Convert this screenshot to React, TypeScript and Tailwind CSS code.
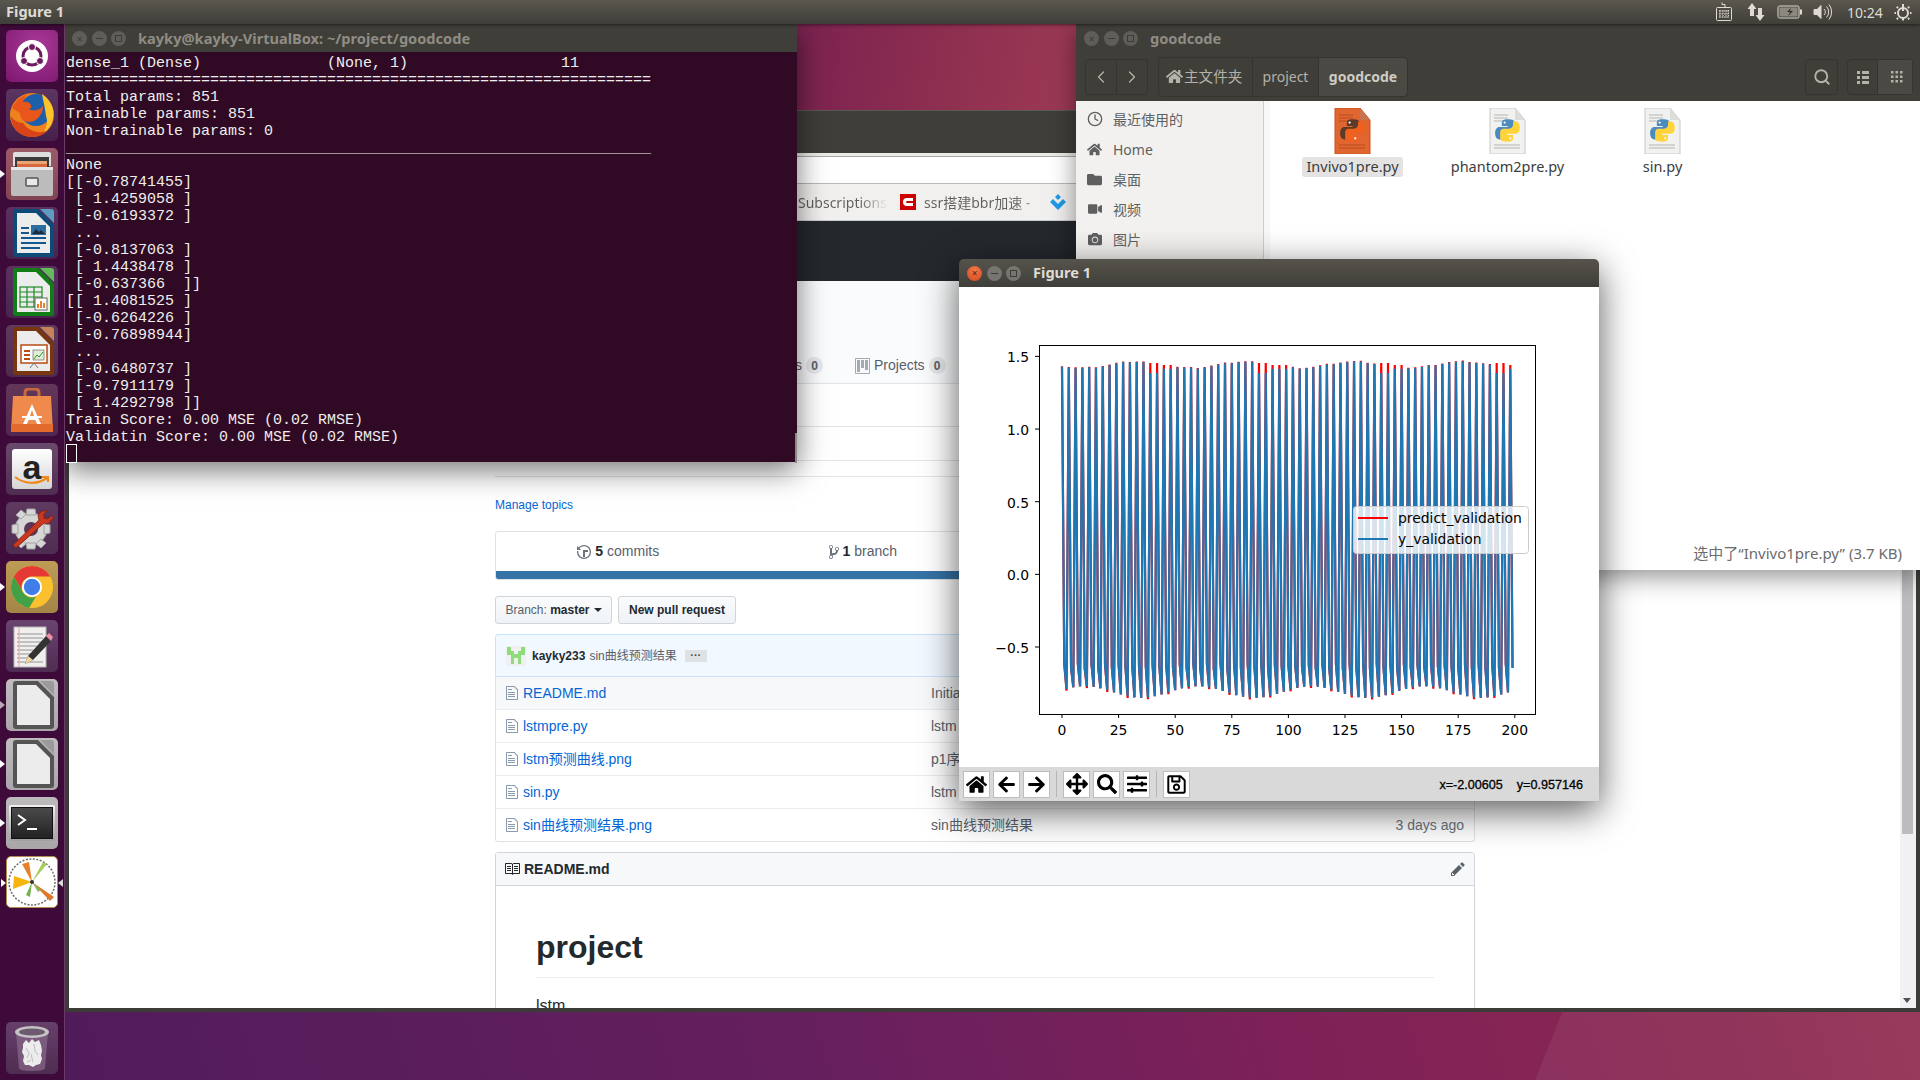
import React from 'react'
import { ChevronLeft, ChevronRight, Clock, Search } from 'lucide-react'
import {
  FaArrowLeft,
  FaArrowRight,
  FaArrowsAlt,
  FaCamera,
  FaFolder,
  FaHome,
  FaRegSave,
  FaSearch,
  FaSlidersH,
  FaVideo,
} from 'react-icons/fa'

const UI_FONT = "font-['Noto_Sans','Noto_Sans_CJK_SC',sans-serif]"
const WEB_FONT = "font-['Liberation_Sans','Noto_Sans_CJK_SC',sans-serif]"

const TERMINAL_LINES = [
  'dense_1 (Dense)              (None, 1)                 11',
  '='.repeat(65),
  'Total params: 851',
  'Trainable params: 851',
  'Non-trainable params: 0',
  '_'.repeat(65),
  'None',
  '[[-0.78741455]',
  ' [ 1.4259058 ]',
  ' [-0.6193372 ]',
  ' ...',
  ' [-0.8137063 ]',
  ' [ 1.4438478 ]',
  ' [-0.637366  ]]',
  '[[ 1.4081525 ]',
  ' [-0.6264226 ]',
  ' [-0.76898944]',
  ' ...',
  ' [-0.6480737 ]',
  ' [-0.7911179 ]',
  ' [ 1.4292798 ]]',
  'Train Score: 0.00 MSE (0.02 RMSE)',
  'Validatin Score: 0.00 MSE (0.02 RMSE)',
]

const FILES = [
  { name: 'README.md', message: 'Initial commit', age: '', hover: true },
  { name: 'lstmpre.py', message: 'lstm', age: '', hover: false },
  { name: 'lstm预测曲线.png', message: 'p1序列', age: '', hover: false },
  { name: 'sin.py', message: 'lstm', age: '', hover: false },
  { name: 'sin曲线预测结果.png', message: 'sin曲线预测结果', age: '3 days ago', hover: false },
]

// the plotted values repeat every 3 samples: peak, kink, trough
const STRONG_MISS = [39, 42, 87, 90, 141, 144, 192, 195]
const MILD_MISS = [45, 48, 93, 96, 99, 147, 150, 198]

function peakAt(x: number) {
  const wobble = ((x * 7) % 5) * 0.002
  return 1.437 + 0.022 * Math.cos(((x - 33) * 2 * Math.PI) / 48) + wobble
}

function troughAt(x: number) {
  return -0.81 - 0.04 * Math.cos(((x - 35) * 2 * Math.PI) / 50)
}

function seriesPoints(kind: 'predict' | 'actual') {
  const points: string[] = []
  const toX = (x: number) => (103 + x * 2.264).toFixed(2)
  const toY = (v: number) => (69.4 + (1.5 - v) * 145.3).toFixed(2)
  for (let x = 0; x < 200; x += 3) {
    let peak = peakAt(x)
    let trough = troughAt(x + 2)
    if (kind === 'predict') {
      peak = STRONG_MISS.includes(x) ? 1.455 : MILD_MISS.includes(x) ? 1.44 : peak + 0.004
      trough -= x % 9 === 0 ? 0.012 : 0
    } else if (STRONG_MISS.includes(x)) {
      peak = 1.385
    } else if (MILD_MISS.includes(x)) {
      peak = 1.415
    }
    points.push(`${toX(x)},${toY(peak)}`)
    points.push(`${toX(x + 1)},${toY(-0.63 + 0.015 * Math.cos(x))}`)
    if (x < 198) points.push(`${toX(x + 2)},${toY(trough)}`)
  }
  return points.join(' ')
}

function WindowButtons({ focused }: { focused?: boolean }) {
  return (
    <div className="flex items-center gap-[4.5px]">
      <div
        className={
          focused
            ? 'w-[15px] h-[15px] rounded-full bg-[radial-gradient(circle_at_50%_30%,#f0794a,#d9481c)] flex items-center justify-center text-[10px] leading-none text-[#5a2010]'
            : 'w-[15px] h-[15px] rounded-full bg-[#5f5d57] flex items-center justify-center text-[10px] leading-none text-[#3c3b37]'
        }
      >
        ×
      </div>
      <div
        className={
          focused
            ? 'w-[15px] h-[15px] rounded-full bg-[#77756f] flex items-center justify-center'
            : 'w-[15px] h-[15px] rounded-full bg-[#5f5d57] flex items-center justify-center'
        }
      >
        <div className="w-[7px] h-[1px] bg-[#3c3b37]" />
      </div>
      <div
        className={
          focused
            ? 'w-[15px] h-[15px] rounded-full bg-[#77756f] flex items-center justify-center'
            : 'w-[15px] h-[15px] rounded-full bg-[#5f5d57] flex items-center justify-center'
        }
      >
        <div className="w-[7px] h-[7px] border border-[#3c3b37]" />
      </div>
    </div>
  )
}

function TopPanel() {
  return (
    <div
      className={`absolute left-0 top-0 z-50 w-full h-[24px] flex items-center pl-[6px] pr-[4px] bg-[linear-gradient(#5a574e,#3f3e39)] shadow-[0_1px_3px_rgba(0,0,0,0.5)] text-[#dfdbd2] ${UI_FONT}`}
    >
      <span className="text-[14.6px] font-bold">Figure 1</span>
      <div className="ml-auto flex items-center h-full">
        <div className="w-[32px] flex justify-center">
          <svg width="18" height="20" viewBox="0 0 18 20" fill="none" stroke="#dfdbd2">
            <path d="M10 5V2.5h-3V0.5" />
            <rect x="1.5" y="5.5" width="15" height="13" rx="1" />
            <path d="M4 9h10M4 12h10M4 15h10M5 8v8M8 8v8M11 8v8M13.500 8v8" strokeDasharray="1.500 1" />
          </svg>
        </div>
        <div className="w-[32px] flex justify-center">
          <svg width="18" height="20" viewBox="0 0 18 20" fill="#dfdbd2">
            <path d="M5 1l4.500 6H7v7H3V7H.5zM13 19l-4.500-6H11V6h4v7h2.500z" />
          </svg>
        </div>
        <div className="w-[34px] flex justify-center">
          <svg width="25" height="14" viewBox="0 0 25 14" fill="none">
            <rect x="1" y="1" width="21" height="12" rx="1.500" stroke="#dfdbd2" />
            <rect x="2.500" y="2.500" width="18" height="9" fill="#8a877e" />
            <rect x="23" y="4.500" width="2" height="5" fill="#dfdbd2" />
            <path d="M14 3l-4 4h3l-2 4 5-5h-3z" fill="#2f2e2a" />
          </svg>
        </div>
        <div className="w-[34px] flex justify-center">
          <svg width="20" height="18" viewBox="0 0 20 18" fill="none" stroke="#dfdbd2">
            <path d="M1 6.500h3l4-4v13l-4-4H1z" fill="#dfdbd2" />
            <path d="M11 6a4 4 0 0 1 0 6M13.500 3.500a8 8 0 0 1 0 11M16 1.500a12 12 0 0 1 0 15" />
          </svg>
        </div>
        <div className="w-[50px] text-center text-[14px]">10:24</div>
        <div className="w-[26px] flex justify-center">
          <svg width="18" height="18" viewBox="0 0 18 18" fill="none" stroke="#dfdbd2" strokeWidth="2">
            <circle cx="9" cy="10" r="5" />
            <path d="M9 1v7M9 15v2.500M2 10H.5M16 10h1.500M4 5L2.800 3.800M14 5l1.200-1.200M4 15l-1.200 1.200M14 15l1.200 1.200" />
          </svg>
        </div>
      </div>
    </div>
  )
}

function Tile({ className, pip, pipRight, hollow, children }: { className: string; pip?: boolean; pipRight?: boolean; hollow?: boolean; children: React.ReactNode }) {
  return (
    <div className={`relative shrink-0 w-[52px] h-[52px] mx-[6px] rounded-[5px] flex items-center justify-center ${className}`}>
      {pip && (
        <div className="absolute left-[-6px] top-[22px] w-0 h-0 border-y-[4px] border-y-transparent border-l-[5px] border-l-white" />
      )}
      {hollow && (
        <div className="absolute left-[-6px] top-[22px] w-0 h-0 border-y-[4px] border-y-transparent border-l-[5px] border-l-[#b9a8b6]" />
      )}
      {pipRight && (
        <div className="absolute right-[-6px] top-[22px] w-0 h-0 border-y-[4px] border-y-transparent border-r-[5px] border-r-[#dcdcdc]" />
      )}
      {children}
    </div>
  )
}

function LibreDoc({ edge, fold, children }: { edge: string; fold: string; children?: React.ReactNode }) {
  return (
    <svg width="44" height="48" viewBox="0 0 44 48">
      <path d="M3 3q0-3 3-3h22l16 16v29q0 3-3 3H6q-3 0-3-3z" fill={edge} />
      <path d="M7 4h19l14 14v26H7z" fill="#ececec" />
      <path d="M30 0h11q3 0 3 3v11z" fill={fold} />
      {children}
    </svg>
  )
}

function Launcher() {
  return (
    <div className="absolute left-0 top-[24px] bottom-0 z-40 w-[65px] pt-[6px] pb-[6px] flex flex-col gap-[7px] bg-[#3e0a3a] border-r border-r-[#6b3a67]">
      <Tile className="bg-[radial-gradient(circle_at_60%_30%,#a83a96,#7d1670)]">
        <svg width="44" height="44" viewBox="0 0 44 44">
          <circle cx="22" cy="22" r="16" fill="#fff" />
          <circle cx="22" cy="22" r="9" fill="none" stroke="#6d1a5f" strokeWidth="3" />
          <circle cx="22" cy="13" r="3.500" fill="#6d1a5f" stroke="#fff" />
          <circle cx="14" cy="27" r="3.500" fill="#6d1a5f" stroke="#fff" />
          <circle cx="30" cy="27" r="3.500" fill="#6d1a5f" stroke="#fff" />
        </svg>
      </Tile>
      <Tile className="bg-[linear-gradient(#5c3660,#46214c)]">
        <svg width="46" height="46" viewBox="0 0 46 46">
          <circle cx="23" cy="23" r="22" fill="#f0811f" />
          <circle cx="27" cy="18" r="16" fill="#1d5fa8" />
          <path d="M33 2c8 5 13 14 11 24-1 7-5 12-10 15 4-6 5-11 3-17-1-9-3-16-4-22z" fill="#fcc32c" />
          <path d="M3 16C6 9 12 4 18 3c-3 3-4 5-4 7 3-1 7 0 8 3 1 2 0 3-2 4 5 3 11 1 14-3 0 8-6 16-14 16-6 0-9-4-9-9z" fill="#e8561c" />
          <path d="M2 24c0 12 9 21 21 21 6 0 11-2 15-6-9 3-19 0-24-8-5 0-10-3-12-7z" fill="#d9431a" />
        </svg>
      </Tile>
      <Tile pip className="bg-[linear-gradient(#9c5a68,#824452)]">
        <svg width="42" height="44" viewBox="0 0 42 44">
          <path d="M2 2q0-2 2-2h34q2 0 2 2v12H2z" fill="#dedede" />
          <rect x="4" y="5" width="34" height="11" fill="#3a3a3a" />
          <rect x="6" y="9" width="30" height="3" fill="#e9a474" />
          <rect x="6" y="12" width="30" height="4" fill="#d9693a" />
          <rect y="15" width="42" height="29" rx="2" fill="#bcbcbc" />
          <rect y="15" width="42" height="3" fill="#e6e6e6" />
          <rect x="15" y="26" width="12" height="8" rx="1" fill="#e8e8e8" stroke="#555" strokeWidth="1.500" />
        </svg>
      </Tile>
      <Tile className="bg-[linear-gradient(#5a3262,#4a2450)]">
        <LibreDoc edge="#0c4b78" fold="#5f9cc4">
          <path d="M11 18h8v2h-8zM11 23h8v2h-8zM11 28h25v2H11zM11 33h25v2H11zM11 38h19v2H11z" fill="#14578f" />
          <rect x="21" y="16" width="15" height="10" fill="#2e6da0" />
          <path d="M22 25l4-5 3 3 2-2 4 4z" fill="#1d2d3c" />
        </LibreDoc>
      </Tile>
      <Tile className="bg-[linear-gradient(#5a3262,#4a2450)]">
        <LibreDoc edge="#127c17" fold="#62bc58">
          <g fill="none" stroke="#1c8a24" strokeWidth="1.200">
            <rect x="10" y="19" width="22" height="20" />
            <path d="M10 24h22M10 29h22M10 34h22M17 19v20M24 19v20" />
          </g>
          <rect x="25" y="30" width="12" height="12" fill="#fff" stroke="#666" />
          <path d="M27 40v-4h2v4zM30 40v-7h2v7zM33 40v-5h2v5z" fill="#e8812a" />
        </LibreDoc>
      </Tile>
      <Tile className="bg-[linear-gradient(#5f3a5c,#50294e)]">
        <LibreDoc edge="#773510" fold="#c6835a">
          <rect x="11" y="18" width="26" height="18" fill="#fff" stroke="#b84c14" strokeWidth="1.500" />
          <path d="M14 23h6v2h-6zM14 27h6v2h-6zM14 31h6v2h-6z" fill="#b84c14" />
          <rect x="23" y="23" width="11" height="10" fill="#e3ecd8" stroke="#666" strokeWidth=".7" />
          <path d="M24 32l3-4 2 2 4-5" stroke="#2b9b2b" fill="none" />
          <path d="M24 36l-4 5M24 36l4 5" stroke="#777" />
        </LibreDoc>
      </Tile>
      <Tile className="bg-[linear-gradient(#623759,#4f2750)]">
        <svg width="42" height="44" viewBox="0 0 42 44">
          <path d="M14 10V5q0-4 4-4h6q4 0 4 4v5" fill="none" stroke="#c9683a" strokeWidth="3" />
          <path d="M2 8h38l2 36H0z" fill="#ef8a4c" />
          <path d="M0 36h42v8H0z" fill="#e26a2c" />
          <path d="M21 16l-9 20h4l1.500-4h7l1.500 4h4zM19 28l2-6 2 6z" fill="#fff" />
          <path d="M11 28h20v2H11z" fill="#fff" />
        </svg>
      </Tile>
      <Tile className="bg-[linear-gradient(#6a4a6c,#4f2c52)]">
        <div className="relative w-[40px] h-[40px] rounded-[3px] bg-[linear-gradient(#ffffff,#d5d5d5)] flex justify-center">
          <span className="font-['Liberation_Sans',sans-serif] text-[34px] leading-[36px] font-bold text-[#222]">a</span>
          <svg className="absolute left-[1px] top-[26px]" width="38" height="12" viewBox="0 0 38 12" fill="none" stroke="#f08a1c" strokeWidth="2.200">
            <path d="M2 2c9 7 22 8 32 1M29 2h6v5" />
          </svg>
        </div>
      </Tile>
      <Tile className="bg-[linear-gradient(#5f3a60,#4f2c52)]">
        <svg width="46" height="46" viewBox="0 0 46 46">
          <g fill="#d6d6d6" stroke="#a3a3a3">
            <circle cx="22" cy="24" r="16" />
            <path d="M18 4h8l1 6h-10zM18 44h8l1-6h-10zM3 20v8l6 1v-10zM41 20v8l-6 1v-10zM7 10l5-5 5 4-5 5zM37 38l-5 5-5-4 5-5zM7 38l5 5 5-4-5-5z" />
          </g>
          <circle cx="22" cy="24" r="7" fill="#5a355c" />
          <path d="M4 40l3 3 28-25 4 1 6-7-3-1-3 3-4-1 0-4 3-3c-4-1-8 1-9 5l1 4z" fill="#c8371e" stroke="#7a1f10" strokeWidth=".8" />
        </svg>
      </Tile>
      <Tile pip className="bg-[linear-gradient(#bd9c56,#a58546)]">
        <svg width="46" height="46" viewBox="0 0 48 48">
          <circle cx="24" cy="24" r="22" fill="#fbc02d" />
          <path d="M24 2a22 22 0 0 1 19 11H24a11 11 0 0 0-9.500 16.500L5 13A22 22 0 0 1 24 2z" fill="#e53935" />
          <path d="M5 13l9.500 16.500A11 11 0 0 0 28 34.300L21 45.800A22 22 0 0 1 5 13z" fill="#43a047" />
          <circle cx="24" cy="24" r="10.500" fill="#fff" />
          <circle cx="24" cy="24" r="8.500" fill="#3f7ee8" />
        </svg>
      </Tile>
      <Tile className="bg-[linear-gradient(#6a4470,#4f2c52)]">
        <svg width="42" height="44" viewBox="0 0 42 44">
          <rect x="3" y="3" width="32" height="40" fill="#f1eeee" stroke="#b5b5b5" />
          <path d="M6 10h26M6 14h26M6 18h26M6 22h20M6 26h16M6 30h14M6 34h12M6 38h26" stroke="#8a8a8a" strokeWidth=".9" />
          <path d="M8 3v40" stroke="#e6a6a6" />
          <path d="M14 40l3-8 18-20 5 5-18 19z" fill="#333" />
          <path d="M35 12l3-3 4 4-2 4z" fill="#f090a8" />
          <path d="M14 40l3-8 5 4z" fill="#f2d79a" />
        </svg>
      </Tile>
      <Tile hollow className="bg-[linear-gradient(#c0bcc0,#aba6ab)]">
        <LibreDoc edge="#555" fold="#9c9a9c" />
      </Tile>
      <Tile pip className="bg-[linear-gradient(#c0bcc0,#aba6ab)]">
        <LibreDoc edge="#555" fold="#9c9a9c" />
      </Tile>
      <Tile pip className="bg-[linear-gradient(#bdbabb,#a9a6a7)]">
        <div className="w-[46px] h-[36px] p-[2px] bg-[linear-gradient(#f0f0f0,#a0a0a0)] rounded-[2px]">
          <div className="w-full h-full bg-[linear-gradient(#4a4a4a,#222)] border border-[#111] relative">
            <svg className="absolute left-[5px] top-[6px]" width="24" height="18" viewBox="0 0 24 18" fill="none" stroke="#fff" strokeWidth="2">
              <path d="M1 1l7 5-7 5M10 15h10" />
            </svg>
          </div>
        </div>
      </Tile>
      <Tile pip pipRight className="bg-white border border-[#b58a4a]">
        <svg width="50" height="50" viewBox="0 0 50 50">
          <circle cx="25" cy="25" r="23" fill="#fff" stroke="#6a6a6a" strokeWidth="1.500" strokeDasharray="2 1.500" />
          <path d="M25 25L7 19l-1 13z" fill="#f5b50c" />
          <path d="M25 25L15 7l7-2z" fill="#e87f2a" />
          <path d="M25 25L36 5l4 2z" fill="#a6cc5a" />
          <path d="M25 25l22 15-4 4z" fill="#e0782a" />
          <path d="M25 25l-6 13 4 2z" fill="#6db34e" />
          <path d="M25 25l6 10 3-2z" fill="#88b860" />
          <circle cx="25" cy="25" r="2" fill="#333" />
        </svg>
      </Tile>
      <Tile className="mt-auto bg-[linear-gradient(#66406a,#4f2c52)]">
        <svg width="36" height="48" viewBox="0 0 36 48">
          <path d="M2 8l3 36q0 3 13 3t13-3l3-36z" fill="#8a6a8c" opacity=".7" />
          <path d="M9 20l3-4 3 3 3-4 3 3 4-2 2 5 1 6-1 4 1 4-2 5-4 1-3 2-4-2-4 0-2-4 1-5-2-4 1-4z" fill="#ececec" />
          <path d="M12 24l3 5-2 5M20 20l1 7 3 4M17 30l2 8M13 38l4-2" stroke="#bdbdbd" fill="none" />
          <ellipse cx="18" cy="8" rx="17" ry="6" fill="#c4c4c4" />
          <ellipse cx="18" cy="8" rx="13" ry="3.500" fill="#6d5a70" />
        </svg>
      </Tile>
    </div>
  )
}

function Terminal() {
  return (
    <div className="absolute left-[65px] top-[24px] z-30 w-[732px] h-[438px] bg-[#300a24] flex flex-col shadow-[0_8px_28px_rgba(0,0,0,0.55)]">
      <div className={`h-[28px] shrink-0 flex items-center pl-[7px] pt-[1px] bg-[#3f3e39] text-[#8f8c84] ${UI_FONT}`}>
        <WindowButtons />
        <span className="ml-[12px] text-[14.6px] font-bold">kayky@kayky-VirtualBox: ~/project/goodcode</span>
      </div>
      <div className="relative flex-1 pt-[3px] pl-[1px] font-['Liberation_Mono',monospace] text-[15px] leading-[17px] text-[#eeeeec] whitespace-pre">
        {TERMINAL_LINES.map((line, i) => (
          <div key={i}>{line}</div>
        ))}
        <div className="w-[11px] h-[19px] -mt-[2px] border border-white" />
        <div className="absolute right-0 bottom-0 w-[2px] h-[30px] bg-[#8a8a8a]" />
      </div>
    </div>
  )
}

function FileIcon() {
  return (
    <svg width="12" height="16" viewBox="0 0 12 16" fill="#8a9bb0" className="shrink-0">
      <path fillRule="evenodd" d="M6 5H2V4h4v1zM2 8h7V7H2v1zm0 2h7V9H2v1zm0 2h7v-1H2v1zm10-7.500V14c0 .55-.45 1-1 1H1c-.55 0-1-.45-1-1V2c0-.55.45-1 1-1h7.500L12 4.500zM11 5L8 2H1v12h10V5z" />
    </svg>
  )
}

function Avatar() {
  return (
    <svg width="20" height="20" viewBox="0 0 20 20" className="shrink-0">
      <rect width="20" height="20" fill="#f0f0f0" />
      <path d="M1 1h4v4h3v3h4V5h3V1h4v8h-4v9h-3v-6H8v6H5V9H1z" fill="#8fdc7d" />
    </svg>
  )
}

function BrowserPage() {
  return (
    <div className={`flex-1 h-full overflow-hidden bg-white ${WEB_FONT}`}>
      <div className="h-[103px] border-b border-b-[#e1e4e8] bg-[#fafbfc] pl-[426px] flex items-end pb-[7px] text-[14px] text-[#586069]">
        <div className="w-[328px] flex items-center justify-end gap-[4px]">
          <span>Pull requests</span>
          <span className="w-[17px] h-[17px] rounded-full bg-[#e6e8eb] flex items-center justify-center text-[12px] font-bold">0</span>
        </div>
        <div className="ml-[32px] flex items-center gap-[4px]">
          <svg width="15" height="16" viewBox="0 0 15 16" fill="#a3aab2">
            <path fillRule="evenodd" d="M10 12h3V2h-3v10zm-4-2h3V2H6v8zm-4 4h3V2H2v12zm-1 1h13V1H1v14zM14 0H1a1 1 0 0 0-1 1v14a1 1 0 0 0 1 1h13a1 1 0 0 0 1-1V1a1 1 0 0 0-1-1z" />
          </svg>
          <span>Projects</span>
          <span className="w-[17px] h-[17px] rounded-full bg-[#e6e8eb] flex items-center justify-center text-[12px] font-bold">0</span>
        </div>
      </div>
      <div className="ml-[426px] w-[980px]">
        <div className="h-[43px] border-b border-b-[#e1e4e8]" />
        <div className="h-[34px] border-b border-b-[#e1e4e8]" />
        <div className="h-[16px] border-b border-b-[#e1e4e8]" />
        <div className="h-[54px] pt-[21px] text-[12px] leading-[15px] text-[#0366d6]">Manage topics</div>

        <div className="h-[49px] border border-[#dfe2e5] rounded-[3px] overflow-hidden flex flex-col">
          <div className="flex-1 grid grid-cols-4 text-[14px] text-[#586069]">
            <div className="flex items-center justify-center gap-[4px]">
              <svg width="14" height="16" viewBox="0 0 14 16" fill="#6a737d">
                <path fillRule="evenodd" d="M8 13H6V6h5v2H8v5zM7 1C4.810 1 2.870 2.020 1.590 3.590L0 2v4h4L2.500 4.500C3.550 3.170 5.170 2.300 7 2.300c3.140 0 5.700 2.560 5.700 5.700s-2.560 5.700-5.700 5.700A5.706 5.706 0 0 1 1.300 8c0-.34.030-.67.090-1H.080C.030 7.330 0 7.660 0 8c0 3.860 3.140 7 7 7s7-3.140 7-7-3.140-7-7-7z" />
              </svg>
              <span>
                <b className="text-[#24292e]">5</b> commits
              </span>
            </div>
            <div className="flex items-center justify-center gap-[4px]">
              <svg width="10" height="16" viewBox="0 0 10 16" fill="#6a737d">
                <path fillRule="evenodd" d="M10 5c0-1.110-.89-2-2-2a1.993 1.993 0 0 0-1 3.720v.3c-.02.52-.23.98-.63 1.380-.4.4-.86.61-1.380.63-.83.02-1.480.16-2 .45V4.720a1.993 1.993 0 0 0-1-3.720C.88 1 0 1.890 0 3a2 2 0 0 0 1 1.720v6.560c-.59.35-1 .99-1 1.720 0 1.110.89 2 2 2 1.110 0 2-.89 2-2 0-.53-.2-1-.53-1.360.09-.06.48-.41.59-.47.25-.11.56-.17.94-.17 1.050-.05 1.950-.45 2.750-1.250S8.950 7.770 9 6.730h-.02C9.590 6.370 10 5.730 10 5zM2 1.800c.66 0 1.200.55 1.200 1.200 0 .65-.55 1.200-1.200 1.200C1.350 4.200.8 3.650.8 3c0-.65.55-1.200 1.200-1.200zm0 12.410c-.66 0-1.200-.55-1.200-1.200 0-.65.55-1.200 1.200-1.200.65 0 1.200.55 1.200 1.200 0 .65-.55 1.200-1.200 1.200zm6-8c-.66 0-1.200-.55-1.200-1.200 0-.65.55-1.200 1.200-1.200.65 0 1.200.55 1.200 1.200 0 .65-.55 1.200-1.200 1.200z" />
              </svg>
              <span>
                <b className="text-[#24292e]">1</b> branch
              </span>
            </div>
          </div>
          <div className="h-[8px] bg-[#3572a5]" />
        </div>

        <div className="mt-[16px] h-[28px] flex gap-[6px] text-[12px]">
          <div className="w-[117px] flex items-center justify-center gap-[4px] border border-[#d1d5da] rounded-[3px] bg-[linear-gradient(#fafbfc,#eff3f6)] text-[#586069]">
            <span>
              Branch: <b className="text-[#24292e]">master</b>
            </span>
            <div className="w-0 h-0 border-x-[4px] border-x-transparent border-t-[4px] border-t-[#24292e]" />
          </div>
          <div className="w-[118px] flex items-center justify-center font-bold border border-[#d1d5da] rounded-[3px] bg-[linear-gradient(#fafbfc,#eff3f6)] text-[#24292e]">
            New pull request
          </div>
        </div>

        <div className="mt-[10px] h-[43px] flex items-center pl-[10px] gap-[6px] border border-[#c8e1ff] rounded-t-[3px] bg-[#f1f8ff] text-[12px]">
          <Avatar />
          <b className="text-[#24292e]">kayky233</b>
          <span className="-ml-[2px] text-[#586069]">sin曲线预测结果</span>
          <div className="ml-[2px] w-[22px] h-[12px] rounded-[1px] bg-[#dfe2e5] flex items-center justify-center text-[11px] leading-none font-bold text-[#444d56]">
            ···
          </div>
        </div>
        <div className="border border-t-0 border-[#dfe2e5] rounded-b-[3px]">
          {FILES.map((file) => (
            <div
              key={file.name}
              className={
                file.hover
                  ? 'h-[33px] flex items-center pl-[10px] pr-[10px] border-b border-b-[#eaecef] bg-[#f6f8fa] text-[14px]'
                  : 'h-[33px] last:h-[32px] flex items-center pl-[10px] pr-[10px] border-b border-b-[#eaecef] last:border-b-0 text-[14px]'
              }
            >
              <FileIcon />
              <span className="ml-[5px] w-[408px] text-[#0366d6]">{file.name}</span>
              <span className="text-[#586069] whitespace-nowrap">{file.message}</span>
              <span className="ml-auto text-[#6a737d]">{file.age}</span>
            </div>
          ))}
        </div>

        <div className="mt-[10px] border border-[#d1d5da] rounded-t-[3px]">
          <div className="h-[33px] flex items-center pl-[8px] pr-[9px] gap-[4px] bg-[#f6f8fa] border-b border-b-[#d1d5da] text-[14px] font-bold text-[#24292e]">
            <svg width="16" height="16" viewBox="0 0 16 16" fill="#24292e">
              <path fillRule="evenodd" d="M3 5h4v1H3V5zm0 3h4V7H3v1zm0 2h4V9H3v1zm11-5h-4v1h4V5zm0 2h-4v1h4V7zm0 2h-4v1h4V9zm2-6v9c0 .55-.45 1-1 1H9.500l-1 1-1-1H2c-.55 0-1-.45-1-1V3c0-.55.45-1 1-1h5.500l1 1 1-1H15c.55 0 1 .45 1 1zm-8 .5L7.500 3H2v9h6V3.500zm7-.5H9.500l-.5.5V12h6V3z" />
            </svg>
            README.md
            <svg className="ml-auto" width="14" height="16" viewBox="0 0 14 16" fill="#586069">
              <path fillRule="evenodd" d="M0 12v3h3l8-8-3-3-8 8zm3 2H1v-2h1v1h1v1zm10.300-9.300L12 6 9 3l1.300-1.300a.996.996 0 0 1 1.410 0l1.590 1.590c.39.39.39 1.020 0 1.410z" />
            </svg>
          </div>
          <div className="h-[200px] px-[40px] pt-[42px]">
            <h1 className="text-[32px] leading-[38px] font-bold text-[#24292e] pb-[11px] border-b border-b-[#eaecef]">project</h1>
            <p className="mt-[16px] text-[16px] leading-[24px] text-[#24292e]">lstm</p>
          </div>
        </div>
      </div>
    </div>
  )
}

function BrowserWindow() {
  return (
    <div className="absolute left-[65px] top-[110px] z-10 w-[1855px] h-[902px] border-x-4 border-b-4 border-[#3c3b37] flex flex-col bg-white">
      <div className="h-[43px] shrink-0 bg-[#3f3e39] border-t border-t-[#5a5954]" />
      <div className="h-[4px] shrink-0 bg-[#ecebe9] border-b border-b-[#aaaaaa]" />
      <div className="h-[27px] shrink-0 bg-white border-b border-b-[#b9b9b9]" />
      <div className={`h-[37px] shrink-0 pl-[729px] flex items-center bg-[#f2f0ee] border-b border-b-[#cccccc] text-[14px] text-[#5f5f5f] ${UI_FONT}`}>
        <span className="w-[102px] overflow-hidden whitespace-nowrap bg-[linear-gradient(90deg,#5f5f5f_60%,#f2f0ee_88%)] bg-clip-text text-transparent">Subscriptions</span>
        <div className="w-[16px] h-[16px] mr-[8px] bg-[#cc0000] flex items-center justify-center">
          <div className="w-[10px] h-[8px] rounded-l-full border-[3px] border-r-0 border-white" />
        </div>
        <span className="w-[126px] bg-[linear-gradient(90deg,#5f5f5f_70%,#c9c7c5_95%)] bg-clip-text text-transparent">ssr搭建bbr加速 -</span>
        <svg width="16" height="16" viewBox="0 0 16 16" fill="#1e9be8">
          <path d="M8 0l3 3-3 3-3-3zM3 5l3 3 2 2 2-2 3-3 3 3-8 8-8-8z" />
        </svg>
      </div>
      <div className="h-[60px] shrink-0 bg-[#24292e]" />
      <div className="flex-1 min-h-0 flex">
        <BrowserPage />
        <div className="relative w-[16px] h-full bg-[#f1f1f1]">
          <div className="absolute left-[2px] top-0 w-[11px] h-[553px] bg-[#bcbcbc]" />
          <div className="absolute left-[3px] bottom-[5px] w-0 h-0 border-x-[4px] border-x-transparent border-t-[5px] border-t-[#505050]" />
        </div>
      </div>
    </div>
  )
}

function PyFile({ orange }: { orange?: boolean }) {
  const top = orange ? '#5c3a28' : '#4b8bbe'
  const bottom = orange ? '#f0601f' : '#ffd43b'
  return (
    <svg width="37" height="46" viewBox="0 0 37 46">
      <path d="M1 0h25l10 12v34H1z" fill={orange ? '#e0652f' : '#f1f1ef'} stroke={orange ? '#c9531f' : '#c8c8c8'} />
      <path d="M26 0l10 12H26z" fill={orange ? '#c9734c' : '#dcdcda'} />
      <path d="M5 7h14M5 10h14M5 13h10M5 37h26M5 40h26" stroke={orange ? '#b94f20' : '#b5b5b5'} />
      <g transform="translate(5 9) scale(1.120)">
        <path d="M12 2c-5 0-5 2.200-5 3v3h5.200v1H5c-2 0-4 1.500-4 5.500S3 20 5 20h2v-3c0-2 1.700-3.500 3.500-3.500h5c1.600 0 3-1.300 3-3V5c0-1.700-1.600-3-6.500-3z" fill={top} />
        <path d="M12 2c-5 0-5 2.200-5 3v3h5.200v1H5c-2 0-4 1.500-4 5.500S3 20 5 20h2v-3c0-2 1.700-3.500 3.500-3.500h5c1.600 0 3-1.300 3-3V5c0-1.700-1.600-3-6.500-3z" fill={bottom} transform="rotate(180 12 12)" />
        <circle cx="9.500" cy="5" r="1" fill="#fff" />
        <circle cx="14.500" cy="19" r="1" fill="#fff" />
      </g>
    </svg>
  )
}

function FileManager() {
  return (
    <div className={`absolute left-[1076px] top-[24px] z-20 w-[844px] h-[546px] flex flex-col shadow-[0_6px_24px_rgba(0,0,0,0.45)] ${UI_FONT}`}>
      <div className="h-[77px] shrink-0 bg-[#3f3e39] flex flex-col">
        <div className="h-[29px] flex items-center pl-[8px] text-[#8f8c84]">
          <WindowButtons />
          <span className="ml-[12px] text-[14.6px] font-bold">goodcode</span>
        </div>
        <div className="flex-1 flex items-center pl-[9px] pr-[7px] pb-[1px] text-[#b5b2a9]">
          <div className="w-[63px] h-[36px] flex border border-[#35342f] rounded-[4px]">
            <div className="flex-1 flex items-center justify-center border-r border-r-[#35342f]">
              <ChevronLeft size={20} strokeWidth={1.500} />
            </div>
            <div className="flex-1 flex items-center justify-center">
              <ChevronRight size={20} strokeWidth={1.500} />
            </div>
          </div>
          <div className="ml-[10px] h-[40px] flex border border-[#35342f] rounded-[4px] text-[14px]">
            <div className="w-[94px] flex items-center pl-[7px] gap-[1px] border-r border-r-[#35342f]">
              <FaHome size={17} />
              <span className="text-[14.6px]">主文件夹</span>
            </div>
            <div className="w-[66px] flex items-center justify-center border-r border-r-[#35342f]">project</div>
            <div className="w-[88px] flex items-center justify-center font-bold bg-[#4a4943] rounded-r-[4px] text-[#cfccc3]">goodcode</div>
          </div>
          <div className="ml-auto w-[33px] h-[36px] flex items-center justify-center border border-[#35342f] rounded-[4px]">
            <Search size={18} strokeWidth={2.500} />
          </div>
          <div className="ml-[9px] w-[66px] h-[36px] flex border border-[#35342f] rounded-[4px]">
            <div className="w-[30px] flex items-center justify-center border-r border-r-[#35342f]">
              <svg width="14" height="14" viewBox="0 0 14 14" fill="#b5b2a9">
                <path d="M1 1h3v3H1zM6 1h7v3H6zM1 6h3v3H1zM6 6h7v3H6zM1 11h3v3H1zM6 11h7v3H6z" />
              </svg>
            </div>
            <div className="flex-1 flex items-center justify-center pl-[3px] bg-[#4a4943]">
              <svg width="14" height="14" viewBox="0 0 14 14" fill="#b5b2a9">
                <path d="M1 1h2.500v2.500H1zM5.500 1H8v2.500H5.500zM10 1h2.500v2.500H10zM1 5.500h2.500V8H1zM5.500 5.500H8V8H5.500zM10 5.500h2.500V8H10zM1 10h2.500v2.500H1zM5.500 10H8v2.500H5.500zM10 10h2.500v2.500H10z" />
              </svg>
            </div>
          </div>
        </div>
      </div>
      <div className="flex-1 min-h-0 flex bg-white">
        <div className="w-[188px] pt-[3px] bg-[#f2f1f0] border-r border-r-[#cfcdcb] text-[14px] text-[#5f5f5f]">
          <div className="h-[30px] flex items-center pl-[10px] gap-[10px]">
            <span className="w-[17px] flex justify-center"><Clock size={16} /></span>
            最近使用的
          </div>
          <div className="h-[30px] flex items-center pl-[10px] gap-[10px]">
            <span className="w-[17px] flex justify-center"><FaHome size={15} /></span>
            Home
          </div>
          <div className="h-[30px] flex items-center pl-[10px] gap-[10px]">
            <span className="w-[17px] flex justify-center"><FaFolder size={15} /></span>
            桌面
          </div>
          <div className="h-[30px] flex items-center pl-[10px] gap-[10px]">
            <span className="w-[17px] flex justify-center"><FaVideo size={14} /></span>
            视频
          </div>
          <div className="h-[30px] flex items-center pl-[10px] gap-[10px]">
            <span className="w-[17px] flex justify-center"><FaCamera size={14} /></span>
            图片
          </div>
        </div>
        <div className="w-[6px] bg-[#f7f7f7]" />
        <div className="flex-1 flex flex-col justify-between pl-[5px] pt-[7px] pb-[6px] text-[14.5px] text-[#3c3c3c]">
          <div className="flex">
            <div className="w-[155px] flex flex-col items-center gap-[3px]">
              <PyFile orange />
              <span className="h-[20px] w-[101px] rounded-[3px] bg-[#e5e3e2] text-center leading-[19px]">Invivo1pre.py</span>
            </div>
            <div className="w-[155px] flex flex-col items-center gap-[3px]">
              <PyFile />
              <span className="h-[20px] leading-[19px]">phantom2pre.py</span>
            </div>
            <div className="w-[155px] flex flex-col items-center gap-[3px]">
              <PyFile />
              <span className="h-[20px] leading-[19px]">sin.py</span>
            </div>
          </div>
          <div className="pr-[18px] text-right text-[15px] text-[#6b6b6b]">选中了“Invivo1pre.py” (3.7 KB)</div>
        </div>
      </div>
    </div>
  )
}

function ToolButton({ children }: { children: React.ReactNode }) {
  return (
    <div className="w-[27px] h-[27px] flex items-center justify-center bg-white border border-[#bdbdbd] text-black">
      {children}
    </div>
  )
}

function FigureWindow() {
  const yTicks = [
    { label: '1.5', v: 1.5 },
    { label: '1.0', v: 1 },
    { label: '0.5', v: 0.5 },
    { label: '0.0', v: 0 },
    { label: '−0.5', v: -0.5 },
  ]
  const xTicks = [0, 25, 50, 75, 100, 125, 150, 175, 200]
  return (
    <div className="absolute left-[959px] top-[259px] z-40 w-[640px] flex flex-col rounded-t-[5px] overflow-visible shadow-[0_10px_36px_rgba(0,0,0,0.65)]">
      <div className={`h-[28px] flex items-center pl-[8px] rounded-t-[5px] bg-[linear-gradient(#56534b,#3f3e39)] ${UI_FONT}`}>
        <WindowButtons focused />
        <span className="ml-[12px] text-[14.6px] font-bold text-[#dfdbd2]">Figure 1</span>
      </div>
      <svg width="640" height="480" viewBox="0 0 640 480" className="block bg-white">
        <polyline points={seriesPoints('predict')} fill="none" stroke="#ff0000" strokeWidth="2.200" strokeLinejoin="miter" />
        <polyline points={seriesPoints('actual')} fill="none" stroke="#1f77b4" strokeWidth="2.200" strokeLinejoin="miter" />
        <rect x="80.500" y="58.500" width="496" height="369" fill="none" stroke="#000" />
        <g fontFamily="'DejaVu Sans', sans-serif" fontSize="13.900" fill="#000">
          {yTicks.map((tick) => {
            const y = 69.4 + (1.5 - tick.v) * 145.3
            return (
              <g key={tick.label}>
                <path d={`M76 ${y}h4`} stroke="#000" />
                <text x="70" y={y + 6} textAnchor="end">{tick.label}</text>
              </g>
            )
          })}
          {xTicks.map((tick) => {
            const x = 103 + tick * 2.264
            return (
              <g key={tick}>
                <path d={`M${x} 427v4`} stroke="#000" />
                <text x={x} y="448" textAnchor="middle">{tick}</text>
              </g>
            )
          })}
          <rect x="394.500" y="219.500" width="175" height="47" rx="3" fill="#fff" fillOpacity=".8" stroke="#cccccc" />
          <path d="M399 231h30" stroke="#ff0000" strokeWidth="2" />
          <path d="M399 252h30" stroke="#1f77b4" strokeWidth="2" />
          <text x="439" y="236">predict_validation</text>
          <text x="439" y="257">y_validation</text>
        </g>
      </svg>
      <div className="h-[34px] flex items-center gap-[3px] pl-[4px] pr-[16px] bg-[#d9d9d9]">
        <ToolButton><FaHome size={21} /></ToolButton>
        <ToolButton><FaArrowLeft size={19} /></ToolButton>
        <ToolButton><FaArrowRight size={19} /></ToolButton>
        <div className="w-[1px] h-[26px] mx-[3px] bg-[#b5b5b5]" />
        <ToolButton><FaArrowsAlt size={22} /></ToolButton>
        <ToolButton><FaSearch size={20} /></ToolButton>
        <ToolButton><FaSlidersH size={20} /></ToolButton>
        <div className="w-[1px] h-[26px] mx-[3px] bg-[#b5b5b5]" />
        <ToolButton><FaRegSave size={21} /></ToolButton>
        <span className="ml-auto pt-[2px] font-['Liberation_Sans',sans-serif] text-[12.6px] [-webkit-text-stroke:0.3px_black] whitespace-pre text-black">x=-2.00605    y=0.957146</span>
      </div>
    </div>
  )
}

export default function App() {
  return (
    <div className="relative w-[1920px] h-[1080px] overflow-hidden bg-[linear-gradient(72deg,#4f1b5a_0%,#651f5e_35%,#7f2158_58%,#8b2850_78%,#9c3750_100%)]">
      <div className="absolute inset-0 bg-[#ffffff10] [clip-path:polygon(1563px_1011px,1535px_1080px,1920px_1080px,1920px_1011px)]" />
      <div className="absolute left-[796px] top-[24px] w-[280px] h-[86px] bg-[linear-gradient(100deg,#7a2250,#8f2f50_55%,#9d3a54)]" />
      <TopPanel />
      <Launcher />
      <BrowserWindow />
      <FileManager />
      <Terminal />
      <FigureWindow />
    </div>
  )
}
